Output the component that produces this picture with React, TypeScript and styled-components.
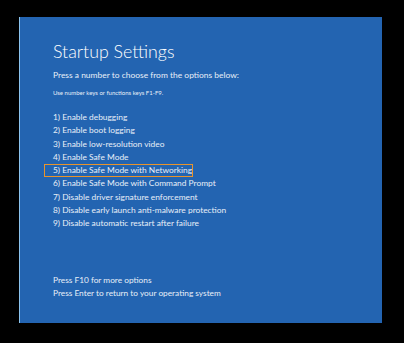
import styled, { createGlobalStyle } from "styled-components";

const GlobalStyle = createGlobalStyle`
    html, body {
        margin: 0;
        padding: 0;
        background: #000;
    }
`

const options = [
    "Enable debugging",
    "Enable boot logging",
    "Enable low-resolution video",
    "Enable Safe Mode",
    "Enable Safe Mode with Networking",
    "Enable Safe Mode with Command Prompt",
    "Disable driver signature enforcement",
    "Disable early launch anti-malware protection",
    "Disable automatic restart after failure",
];

export default function App() {
    return (
        <>
            <GlobalStyle />
            <Screen>
                <Panel>
                    <Title>Startup Settings</Title>
                    <Lead>Press a number to choose from the options below:</Lead>
                    <Hint>Use number keys or functions keys F1-F9.</Hint>
                    <OptionList>
                        {options.map((label, i) => (
                            <Option key={label} $selected={i === 4}>
                                {i + 1}) {label}
                            </Option>
                        ))}
                    </OptionList>
                    <Footer>
                        <Line>Press F10 for more options</Line>
                        <Line>Press Enter to return to your operating system</Line>
                    </Footer>
                </Panel>
            </Screen>
        </>
    );
}

const Screen = styled.div`
    width: 404px;
    height: 343px;
    padding: 17px 0 0 19px;
    box-sizing: border-box;
    background: #000;
    font-family: Lato, "Open Sans", sans-serif;
`

const Panel = styled.div`
    width: 363px;
    height: 306px;
    box-sizing: border-box;
    background: #2364b1;
    border-left: 1px solid #8cc4ee;
    padding: 22px 0 0 33px;
    color: #e8eff8;
`

const Title = styled.h1`
    margin: 0;
    font-size: 17.8px;
    font-weight: 300;
    line-height: 24px;
    color: #fff;
    white-space: nowrap;
`

const Lead = styled.p`
    margin: 6px 0 0;
    font-size: 8.45px;
    line-height: 13px;
    white-space: nowrap;
`

const Hint = styled.p`
    margin: 6px 0 0;
    font-size: 6px;
    line-height: 10px;
    white-space: nowrap;
`

const OptionList = styled.ul`
    list-style: none;
    margin: 13px 0 0;
    padding: 0;
`

const Option = styled.li<{ $selected?: boolean }>`
    font-size: 8.4px;
    line-height: 13.3px;
    height: 13.3px;
    box-sizing: border-box;
    white-space: nowrap;
    ${({ $selected }) => $selected && `
        width: 149px;
        margin-left: -9px;
        padding-left: 8px;
        border: 1px solid #e8942c;
        line-height: 11.3px;
    `}
`

const Footer = styled.div`
    margin-top: 43px;
`

const Line = styled.p`
    margin: 0;
    font-size: 8.3px;
    line-height: 13.3px;
    white-space: nowrap;
`
